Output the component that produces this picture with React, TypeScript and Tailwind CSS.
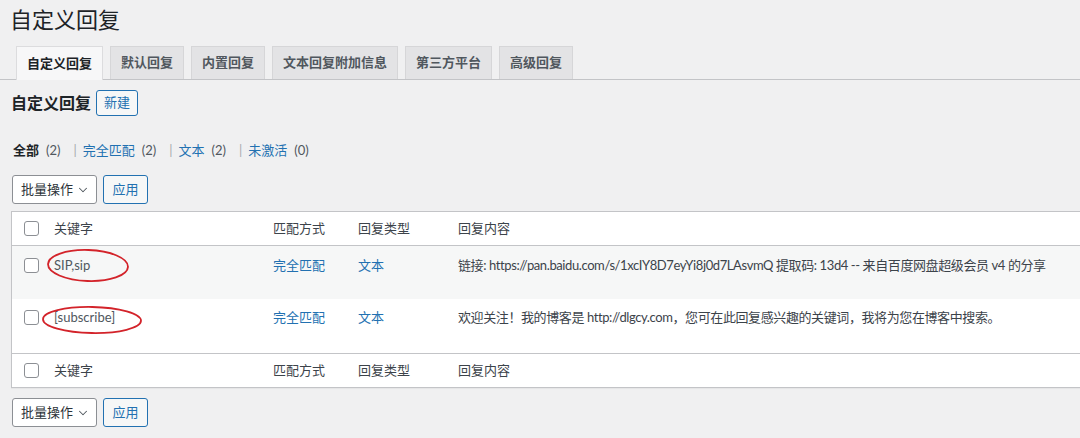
import { ChevronDown } from "lucide-react";

const font = `font-["Lato","Noto_Sans_CJK_SC",sans-serif]`;

const tabs = ["自定义回复", "默认回复", "内置回复", "文本回复附加信息", "第三方平台", "高级回复"];

const cols = "grid grid-cols-[42px_219px_85px_100px_1fr]";

function Checkbox() {
  return <span className="block h-[15px] w-[15px] rounded-[3px] border border-[#8c8f94] bg-white" />;
}

function BulkActions() {
  return (
    <div className="flex items-center gap-[6px] pl-[12px]">
      <div className="flex h-[29px] w-[85px] items-center justify-between rounded-[3px] border border-[#8c8f94] bg-white pl-[8px] pr-[6px] text-[13px] text-[#2c3338]">
        <span>批量操作</span>
        <ChevronDown size={14} strokeWidth={1.75} className="text-[#50575e]" />
      </div>
      <button
        type="button"
        className="h-[29px] w-[45px] rounded-[3px] border border-[#2271b1] bg-[#f6f7f7] text-[13px] text-[#2271b1]"
      >
        应用
      </button>
    </div>
  );
}

function HeaderRow({ top }: { top?: boolean }) {
  return (
    <div
      className={`${cols} h-[34px] items-center bg-white text-[13px] text-[#3c434a] ${
        top ? "border-b border-[#c3c4c7]" : "border-t border-[#c3c4c7]"
      }`}
    >
      <div className="pl-[12px]">
        <Checkbox />
      </div>
      <div>关键字</div>
      <div>匹配方式</div>
      <div>回复类型</div>
      <div>回复内容</div>
    </div>
  );
}

function Ring({ w, h, rot }: { w: number; h: number; rot: number }) {
  return (
    <svg width={w} height={h} viewBox={`0 0 ${w} ${h}`} fill="none">
      <ellipse
        cx={w / 2}
        cy={h / 2}
        rx={w / 2 - 2}
        ry={h / 2 - 2}
        stroke="#d3232a"
        strokeWidth="1.8"
        transform={`rotate(${rot} ${w / 2} ${h / 2})`}
      />
    </svg>
  );
}

const rows = [
  {
    key: "SIP,sip",
    content:
      "链接: https://pan.baidu.com/s/1xcIY8D7eyYi8j0d7LAsvmQ 提取码: 13d4 -- 来自百度网盘超级会员 v4 的分享",
    bg: "bg-[#f6f7f7]",
    h: "h-[53px]",
    pt: "pt-[10px]",
    ring: { left: "-left-[8px]", top: "-top-[8px]", w: 84, h: 35, rot: 2 },
  },
  {
    key: "[subscribe]",
    content:
      "欢迎关注！我的博客是 http://dlgcy.com，您可在此回复感兴趣的关键词，我将为您在博客中搜索。",
    bg: "bg-white",
    h: "h-[54px]",
    pt: "pt-[9px]",
    ring: { left: "-left-[13px]", top: "-top-[3px]", w: 102, h: 30, rot: 1 },
  },
];

export default function App() {
  return (
    <div className={`${font} h-[438px] w-[1080px] overflow-hidden bg-[#f0f0f1] text-[#3c434a]`}>
      <h1 className="pl-[10px] pt-[5px] text-[22px] leading-[30px] text-[#1d2327]">自定义回复</h1>

      <div className="mt-[11px] flex h-[34px] items-end gap-[7px] border-b border-[#c3c4c7] pl-[16px]">
        {tabs.map((t, i) => (
          <div
            key={t}
            className={`flex h-[33px] items-center border border-b-0 px-[10px] text-[13px] font-semibold ${
              i === 0
                ? "relative top-px h-[34px] border-[#dcdcde] bg-[#f7f7f8] text-[#1d2327]"
                : "border-[#d6d6d8] bg-[#e3e3e5] text-[#50575e]"
            }`}
          >
            {t}
          </div>
        ))}
      </div>

      <div className="mt-[10px] flex items-center gap-[5px] pl-[11px]">
        <h2 className="text-[16px] font-bold text-[#1d2327]">自定义回复</h2>
        <button
          type="button"
          className="h-[26px] w-[42px] rounded-[3px] border border-[#2271b1] bg-[#f6f7f7] text-[13px] text-[#2271b1]"
        >
          新建
        </button>
      </div>

      <div className="mt-[24px] flex items-center pl-[13px] text-[13px] leading-[20px]">
        <span className="font-bold text-[#1d2327]">全部</span>
        <span className="ml-[7px] text-[#50575e]">(2)</span>
        <span className="ml-[13px] mr-[6px] text-[#a7aaad]">|</span>
        <span className="text-[#2271b1]">完全匹配</span>
        <span className="ml-[7px] text-[#50575e]">(2)</span>
        <span className="ml-[13px] mr-[6px] text-[#a7aaad]">|</span>
        <span className="text-[#2271b1]">文本</span>
        <span className="ml-[7px] text-[#50575e]">(2)</span>
        <span className="ml-[13px] mr-[6px] text-[#a7aaad]">|</span>
        <span className="text-[#2271b1]">未激活</span>
        <span className="ml-[7px] text-[#50575e]">(0)</span>
      </div>

      <div className="mt-[15px]">
        <BulkActions />
      </div>

      <div className="ml-[11px] mt-[7px] w-[1100px] border border-[#c3c4c7] bg-white shadow-[0_1px_1px_rgba(0,0,0,0.04)]">
        <HeaderRow top />
        {rows.map((r) => (
          <div key={r.key} className={`${cols} ${r.h} ${r.pt} ${r.bg} text-[13px] leading-[18px]`}>
            <div className="pl-[12px] pt-[2px]">
              <Checkbox />
            </div>
            <div className="relative text-[#50575e]">
              <span>{r.key}</span>
              <div className={`absolute ${r.ring.left} ${r.ring.top}`}>
                <Ring w={r.ring.w} h={r.ring.h} rot={r.ring.rot} />
              </div>
            </div>
            <div className="text-[#2271b1]">完全匹配</div>
            <div className="text-[#2271b1]">文本</div>
            <div className="whitespace-nowrap tracking-[-0.4px] text-[#3c434a]">{r.content}</div>
          </div>
        ))}
        <HeaderRow />
      </div>

      <div className="mt-[10px]">
        <BulkActions />
      </div>
    </div>
  );
}
